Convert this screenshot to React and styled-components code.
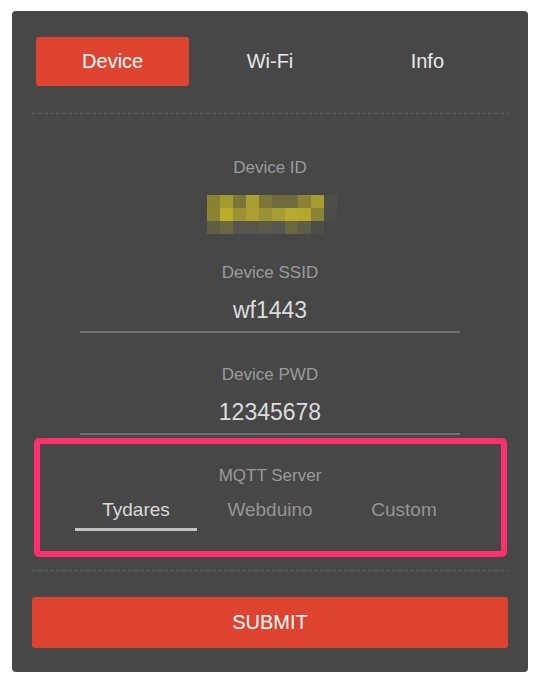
import React, { useState } from "react";
import styled, { createGlobalStyle } from "styled-components";

const GlobalStyle = createGlobalStyle`
  body {
    margin: 0;
    background: #ffffff;
    font-family: "Liberation Sans", Arial, Helvetica, sans-serif;
  }
`;

const Card = styled.div`
  width: 516px;
  margin: 11px 0 0 12px;
  padding: 26px 20px 24px;
  box-sizing: border-box;
  background: #474747;
  border-radius: 4px;
  display: flex;
  flex-direction: column;
`;

const TabRow = styled.div`
  display: grid;
  grid-template-columns: repeat(3, 1fr);
  padding: 0 2px;
  height: 49px;
`;

const Tab = styled.div`
  margin: 0 2px;
  display: flex;
  align-items: center;
  justify-content: center;
  font-size: 20px;
  color: ${(p) => (p.active ? "#ffffff" : "#e8e8e8")};
  background: ${(p) => (p.active ? "#de4430" : "transparent")};
  border-radius: 3px;
  cursor: pointer;
`;

const Divider = styled.div`
  flex: none;
  height: 1px;
  margin-top: ${(p) => p.top}px;
  background: repeating-linear-gradient(
    to right,
    #5f5f5f 0 4px,
    transparent 4px 6px
  );
`;

const Label = styled.div`
  margin-top: ${(p) => p.top}px;
  font-size: 17px;
  line-height: 20px;
  color: #9b9b9b;
  text-align: center;
`;

const Mosaic = styled.svg`
  display: block;
  margin: 17px auto 0;
  transform: translateX(2px);
`;

const Value = styled.div`
  width: 380px;
  margin: 8px auto 0;
  padding: 5px 0 7px;
  font-size: 23px;
  line-height: 28px;
  color: #dcdcdc;
  text-align: center;
  border-bottom: 2px solid #6e6e6e;
`;

const Highlight = styled.div`
  margin: 3px 1px 0 2px;
  padding: 22px 30px 20px 29px;
  border: 6px solid #fd306d;
  border-radius: 5px;
`;

const Options = styled.div`
  display: grid;
  grid-template-columns: repeat(3, 1fr);
  margin-top: 13px;
`;

const Option = styled.div`
  margin: 0 6px;
  padding-bottom: 7px;
  font-size: 19px;
  line-height: 22px;
  text-align: center;
  color: ${(p) => (p.active ? "#d9d9d9" : "#959595")};
  border-bottom: 3px solid ${(p) => (p.active ? "#c2c2c2" : "transparent")};
  cursor: pointer;
`;

const SubmitButton = styled.button`
  flex: none;
  margin-top: 26px;
  height: 51px;
  border: none;
  border-radius: 3px;
  background: #dd432e;
  color: #ffffff;
  font-family: inherit;
  font-size: 20px;
  cursor: pointer;
`;

// blurred device id
const mosaic = [
  ["#8a8232", "#a39a2f", "#7b7536", "#a99e2f", "#7c7638", "#6e6b3f", "#6e6b3e", "#8a8335", "#a69c30", "#4f4f49"],
  ["#8b8431", "#b9ad2a", "#9b9332", "#aa9f30", "#9b9332", "#a79d30", "#b6a92b", "#b4a72b", "#8b8435", "#4b4b47"],
  ["#5f5d45", "#6b6840", "#555450", "#58564a", "#5b5948", "#565550", "#6b6740", "#5f5d47", "#4e4e48", "#474747"],
];

const tabs = ["Device", "Wi-Fi", "Info"];
const servers = ["Tydares", "Webduino", "Custom"];

export default function App() {
  const [tab, setTab] = useState("Device");
  const [server, setServer] = useState("Tydares");

  return (
    <>
      <GlobalStyle />
      <Card>
        <TabRow>
          {tabs.map((t) => (
            <Tab key={t} active={t === tab} onClick={() => setTab(t)}>
              {t}
            </Tab>
          ))}
        </TabRow>
        <Divider top={27} />

        <Label top={44}>Device ID</Label>
        <Mosaic width="130" height="39" viewBox="0 0 130 39">
          {mosaic.map((row, r) =>
            row.map((c, i) => (
              <rect key={r + "-" + i} x={i * 13} y={r * 13} width="13" height="13" fill={c} />
            ))
          )}
        </Mosaic>

        <Label top={29}>Device SSID</Label>
        <Value>wf1443</Value>

        <Label top={32}>Device PWD</Label>
        <Value>12345678</Value>

        <Highlight>
          <Label top={0}>MQTT Server</Label>
          <Options>
            {servers.map((s) => (
              <Option key={s} active={s === server} onClick={() => setServer(s)}>
                {s}
              </Option>
            ))}
          </Options>
        </Highlight>

        <Divider top={13} />
        <SubmitButton>SUBMIT</SubmitButton>
      </Card>
    </>
  );
}
